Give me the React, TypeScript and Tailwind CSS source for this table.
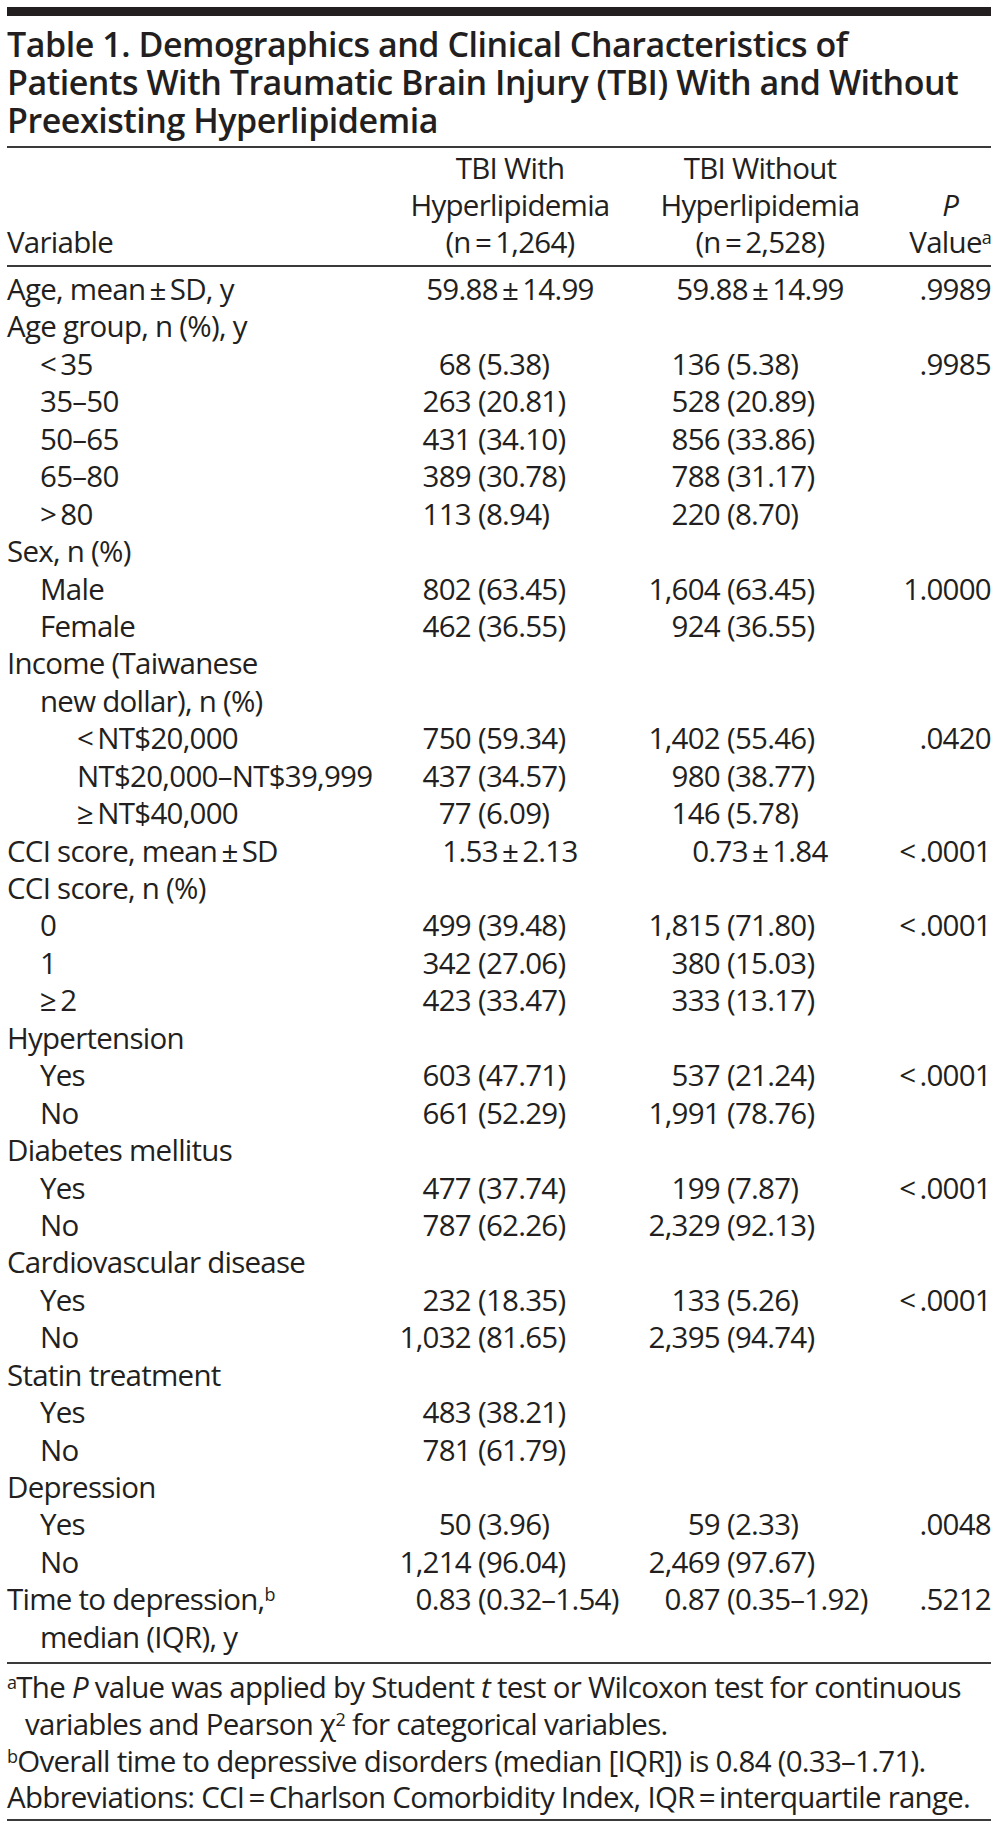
import React from "react";

type Cell = { pm?: string; l?: string; r?: string } | null;
type Row = { label: React.ReactNode; lvl?: number; c1?: Cell; c2?: Cell; p?: string };

const T = "\u2009";

const pr = (l: string, r: string): Cell => ({ l, r: " (" + r + ")" });

const rows: Row[] = [
  { label: `Age, mean${T}±${T}SD, y`, c1: { pm: `59.88${T}±${T}14.99` }, c2: { pm: `59.88${T}±${T}14.99` }, p: ".9989" },
  { label: "Age group, n (%), y" },
  { label: `<${T}35`, lvl: 1, c1: pr("68", "5.38"), c2: pr("136", "5.38"), p: ".9985" },
  { label: "35–50", lvl: 1, c1: pr("263", "20.81"), c2: pr("528", "20.89") },
  { label: "50–65", lvl: 1, c1: pr("431", "34.10"), c2: pr("856", "33.86") },
  { label: "65–80", lvl: 1, c1: pr("389", "30.78"), c2: pr("788", "31.17") },
  { label: `>${T}80`, lvl: 1, c1: pr("113", "8.94"), c2: pr("220", "8.70") },
  { label: "Sex, n (%)" },
  { label: "Male", lvl: 1, c1: pr("802", "63.45"), c2: pr("1,604", "63.45"), p: "1.0000" },
  { label: "Female", lvl: 1, c1: pr("462", "36.55"), c2: pr("924", "36.55") },
  { label: "Income (Taiwanese" },
  { label: "new dollar), n (%)", lvl: 1 },
  { label: `<${T}NT$20,000`, lvl: 2, c1: pr("750", "59.34"), c2: pr("1,402", "55.46"), p: ".0420" },
  { label: "NT$20,000–NT$39,999", lvl: 2, c1: pr("437", "34.57"), c2: pr("980", "38.77") },
  { label: `≥${T}NT$40,000`, lvl: 2, c1: pr("77", "6.09"), c2: pr("146", "5.78") },
  { label: `CCI score, mean${T}±${T}SD`, c1: { pm: `1.53${T}±${T}2.13` }, c2: { pm: `0.73${T}±${T}1.84` }, p: `<${T}.0001` },
  { label: "CCI score, n (%)" },
  { label: "0", lvl: 1, c1: pr("499", "39.48"), c2: pr("1,815", "71.80"), p: `<${T}.0001` },
  { label: "1", lvl: 1, c1: pr("342", "27.06"), c2: pr("380", "15.03") },
  { label: `≥${T}2`, lvl: 1, c1: pr("423", "33.47"), c2: pr("333", "13.17") },
  { label: "Hypertension" },
  { label: "Yes", lvl: 1, c1: pr("603", "47.71"), c2: pr("537", "21.24"), p: `<${T}.0001` },
  { label: "No", lvl: 1, c1: pr("661", "52.29"), c2: pr("1,991", "78.76") },
  { label: "Diabetes mellitus" },
  { label: "Yes", lvl: 1, c1: pr("477", "37.74"), c2: pr("199", "7.87"), p: `<${T}.0001` },
  { label: "No", lvl: 1, c1: pr("787", "62.26"), c2: pr("2,329", "92.13") },
  { label: "Cardiovascular disease" },
  { label: "Yes", lvl: 1, c1: pr("232", "18.35"), c2: pr("133", "5.26"), p: `<${T}.0001` },
  { label: "No", lvl: 1, c1: pr("1,032", "81.65"), c2: pr("2,395", "94.74") },
  { label: "Statin treatment" },
  { label: "Yes", lvl: 1, c1: pr("483", "38.21") },
  { label: "No", lvl: 1, c1: pr("781", "61.79") },
  { label: "Depression" },
  { label: "Yes", lvl: 1, c1: pr("50", "3.96"), c2: pr("59", "2.33"), p: ".0048" },
  { label: "No", lvl: 1, c1: pr("1,214", "96.04"), c2: pr("2,469", "97.67") },
  {
    label: (
      <>
        Time to depression,<sup className="text-[18px]">b</sup>
      </>
    ),
    c1: pr("0.83", "0.32–1.54"),
    c2: pr("0.87", "0.35–1.92"),
    p: ".5212",
  },
  { label: "median (IQR), y", lvl: 1 },
];

function DataCell({ cell, leftW }: { cell?: Cell; leftW: string }) {
  if (!cell) return <div />;
  if (cell.pm) {
    return <div className="text-center whitespace-pre">{cell.pm}</div>;
  }
  return (
    <div className="flex whitespace-pre">
      <span className={`${leftW} shrink-0 text-right`}>{cell.l}</span>
      <span>{cell.r}</span>
    </div>
  );
}

export default function App() {
  return (
    <div className="w-[998px] min-h-[1827px] bg-white px-[7px] pt-[7px] text-[#231f20] font-['Open_Sans',sans-serif]">
      <div className="h-[9px] bg-[#231f20]" />
      <h1 className="mt-[9px] whitespace-nowrap text-[34px] font-semibold leading-[38px] tracking-[-0.0135em]">
        Table 1. Demographics and Clinical Characteristics of
        <br />
        Patients With Traumatic Brain Injury (TBI) With and Without
        <br />
        Preexisting Hyperlipidemia
      </h1>
      <div className="mt-[7px] h-[2px] bg-[#3a3a3a]" />

      <div className="text-[29.5px] tracking-[-0.025em]">
        {/* header */}
        <div className="mt-[1px] grid grid-cols-[378px_250px_250px_106px] leading-[37px]">
          <div className="flex flex-col justify-end">Variable</div>
          <div className="text-center">
            <div>TBI With</div>
            <div>Hyperlipidemia</div>
            <div>(n{T}={T}1,264)</div>
          </div>
          <div className="text-center">
            <div>TBI Without</div>
            <div>Hyperlipidemia</div>
            <div>(n{T}={T}2,528)</div>
          </div>
          <div className="flex flex-col items-end justify-end">
            <div className="text-center">
              <div className="italic">P</div>
              <div>
                Value<sup className="text-[18px]">a</sup>
              </div>
            </div>
          </div>
        </div>
        <div className="mt-[5px] h-[2px] bg-[#3a3a3a]" />

        {/* body */}
        <div className="mt-[3px]">
          {rows.map((r, i) => (
            <div
              key={i}
              className="grid h-[37.45px] grid-cols-[378px_250px_250px_106px] items-center leading-[37.45px]"
            >
              <div
                className={
                  "whitespace-nowrap " +
                  (r.lvl === 2 ? "pl-[70px]" : r.lvl === 1 ? "pl-[33px]" : "")
                }
              >
                {r.label}
              </div>
              <DataCell cell={r.c1} leftW="w-[86px]" />
              <DataCell cell={r.c2} leftW="w-[85px]" />
              <div className="text-right whitespace-pre">{r.p ?? ""}</div>
            </div>
          ))}
        </div>
        <div className="mt-[7px] h-[2px] bg-[#3a3a3a]" />

        {/* footnotes */}
        <div className="mt-[5px] whitespace-nowrap leading-[36.7px]">
          <div>
            <sup className="text-[18px]">a</sup>The <i>P</i> value was applied by Student <i>t</i> test or Wilcoxon test for
            continuous
          </div>
          <div className="pl-[18px]">
            variables and Pearson χ<sup className="text-[18px]">2</sup> for categorical variables.
          </div>
          <div>
            <sup className="text-[18px]">b</sup>Overall time to depressive disorders (median [IQR]) is 0.84 (0.33–1.71).
          </div>
          <div>
            Abbreviations: CCI{T}={T}Charlson Comorbidity Index, IQR{T}={T}interquartile range.
          </div>
        </div>
        <div className="mt-[3px] h-[2px] bg-[#3a3a3a]" />
      </div>
    </div>
  );
}
